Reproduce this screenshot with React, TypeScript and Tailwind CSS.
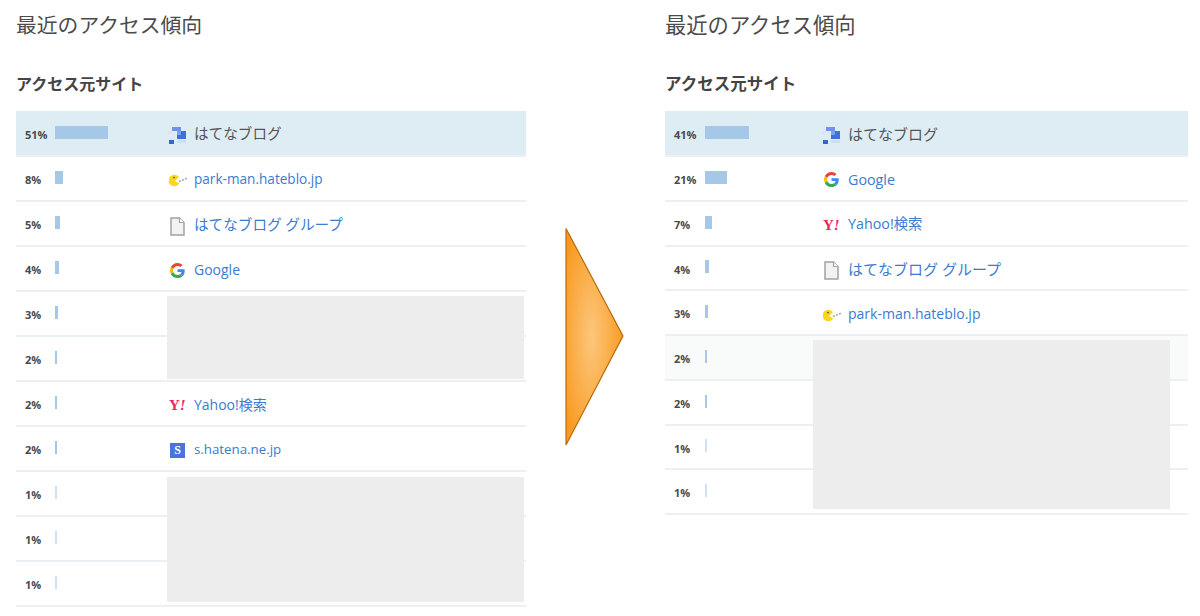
const font = { fontFamily: "'Open Sans', 'Noto Sans CJK JP', sans-serif" };

type Site = { pct: number; label?: string; icon?: string; size?: string; active?: boolean; tint?: boolean };

const leftRows: Site[] = [
  { pct: 51, label: "はてなブログ", icon: "hatena", size: "text-[14.6px]", active: true },
  { pct: 8, label: "park-man.hateblo.jp", icon: "pacman", size: "text-[13.6px]" },
  { pct: 5, label: "はてなブログ グループ", icon: "page", size: "text-[14.6px]" },
  { pct: 4, label: "Google", icon: "google", size: "text-[14px]" },
  { pct: 3 },
  { pct: 2 },
  { pct: 2, label: "Yahoo!検索", icon: "yahoo", size: "text-[14px]" },
  { pct: 2, label: "s.hatena.ne.jp", icon: "star", size: "text-[13.3px]" },
  { pct: 1 },
  { pct: 1 },
  { pct: 1 },
];

const rightRows: Site[] = [
  { pct: 41, label: "はてなブログ", icon: "hatena", size: "text-[15px]", active: true },
  { pct: 21, label: "Google", icon: "google", size: "text-[14.3px]" },
  { pct: 7, label: "Yahoo!検索", icon: "yahoo", size: "text-[14.3px]" },
  { pct: 4, label: "はてなブログ グループ", icon: "page", size: "text-[15px]" },
  { pct: 3, label: "park-man.hateblo.jp", icon: "pacman", size: "text-[14px]" },
  { pct: 2, tint: true },
  { pct: 2 },
  { pct: 1 },
  { pct: 1 },
];

function SiteIcon({ name }: { name?: string }) {
  if (name === "hatena") {
    return (
      <svg width="18" height="18" viewBox="0 0 18 18" className="shrink-0 mt-[5px]">
        <rect x="4" y="0" width="9" height="4" fill="#6f93e6" />
        <rect x="0" y="4" width="4" height="3" fill="#dbe4f6" />
        <rect x="9" y="4" width="9" height="8" fill="#3f6fdc" />
        <rect x="9" y="4" width="4" height="4" fill="#7f9fe8" />
        <rect x="1" y="13" width="5" height="4" fill="#3566d8" />
        <rect x="9" y="13" width="9" height="3" fill="#d0dcf4" />
      </svg>
    );
  }
  if (name === "pacman") {
    return (
      <svg width="19" height="13" viewBox="0 0 19 13" className="shrink-0 mt-[4px] ml-[1px]">
        <path d="M10 3A5.800 5.800 0 1 0 10.300 9.500L6 7Z" fill="#fbd51e" />
        <circle cx="5" cy="3.600" r="0.8" fill="#444" />
        <path d="M10 7.500l1.800-.8M13 6.200l1.800-.8M16 5l1.800-.8" stroke="#a8a8a8" strokeWidth="1.600" />
      </svg>
    );
  }
  if (name === "page") {
    return (
      <svg width="15" height="19" viewBox="0 0 15 19" className="shrink-0 mt-[4px] ml-[2px]">
        <path d="M1 1h8.500L14 5.500V18H1Z" fill="#f2f2f2" stroke="#a3a3a3" strokeWidth="1.500" />
        <path d="M9.500 1v4.500H14" fill="#fff" stroke="#a3a3a3" strokeWidth="1.200" />
      </svg>
    );
  }
  if (name === "google") {
    return (
      <svg width="15" height="15" viewBox="0 0 48 48" className="shrink-0 mt-[2px] ml-[2px]">
        <path fill="#EA4335" d="M24 9.500c3.500 0 6.700 1.200 9.200 3.600l6.900-6.900C35.900 2.400 30.500 0 24 0 14.600 0 6.500 5.400 2.600 13.200l8 6.200C12.500 13.700 17.800 9.500 24 9.500z" />
        <path fill="#4285F4" d="M47 24.500c0-1.600-.1-3.100-.4-4.500H24v9h12.900c-.6 3-2.200 5.500-4.700 7.200l7.700 6C44.400 38.100 47 31.900 47 24.500z" />
        <path fill="#FBBC05" d="M10.600 28.600c-.5-1.400-.8-3-.8-4.600s.3-3.200.8-4.600l-8-6.200C.9 16.500 0 20.100 0 24s.9 7.500 2.600 10.800l8-6.200z" />
        <path fill="#34A853" d="M24 48c6.500 0 11.900-2.100 15.900-5.800l-7.700-6c-2.200 1.500-4.900 2.300-8.200 2.300-6.200 0-11.500-4.200-13.400-9.900l-8 6.200C6.500 42.600 14.600 48 24 48z" />
      </svg>
    );
  }
  if (name === "yahoo") {
    return (
      <span className="w-[18px] shrink-0 ml-[1px] text-[15px] leading-none font-bold text-[#f0245a] mt-[3px]" style={{ fontFamily: "'Liberation Serif', serif" }}>
        Y<span className="italic">!</span>
      </span>
    );
  }
  if (name === "star") {
    return (
      <span className="w-[15px] h-[15px] shrink-0 ml-[2px] bg-[#4a74dc] text-white text-[12px] leading-[15px] font-bold text-center mt-[3px]" style={{ fontFamily: "'Liberation Serif', serif" }}>
        S
      </span>
    );
  }
  return null;
}

function Row({ site, heightClass, pctWidth, labelLeft, barScale }: {
  site: Site;
  heightClass: string;
  pctWidth: string;
  labelLeft: string;
  barScale: number;
}) {
  const bg = site.active ? "bg-[#deecf4]" : site.tint ? "bg-[#f9fbfb]" : "bg-white";
  const barColor = site.pct === 1 ? "bg-[#cfe2f4]" : "bg-[#a6c8e8]";
  return (
    <div className={`flex items-center border-b-2 border-[#ebf0f3] ${site.active ? "h-[46px]" : heightClass} ${bg}`}>
      <span className={`pl-[9px] pt-[4px] shrink-0 text-[11px] font-bold text-[#4a4a4a] ${pctWidth}`}>{site.pct}%</span>
      <div className="w-[114px] shrink-0 -mt-[2px]">
        <div className={`h-[13px] ${barColor}`} style={{ width: Math.max(2, Math.round(site.pct * barScale)) }} />
      </div>
      {site.label && (
        <div className={`flex items-center mt-[1px] ${labelLeft}`}>
          <div className="w-[26px] shrink-0 flex"><SiteIcon name={site.icon} /></div>
          <span className={`mt-[1px] ${site.size} ${site.active ? "text-[#555555]" : "text-[#3b7bd0]"}`}>{site.label}</span>
        </div>
      )}
    </div>
  );
}

function Panel({ rows, widthClass, titleClass, subClass, heightClass, pctWidth, labelLeft, barScale, masks }: {
  rows: Site[];
  widthClass: string;
  titleClass: string;
  subClass: string;
  heightClass: string;
  pctWidth: string;
  labelLeft: string;
  barScale: number;
  masks: string[];
}) {
  return (
    <div className={`shrink-0 ${widthClass}`}>
      <h1 className={`h-[50px] pt-[8px] font-normal text-[#4b4b4b] leading-[34px] ${titleClass}`}>最近のアクセス傾向</h1>
      <h2 className={`h-[61px] pt-[21px] font-bold text-[#444444] leading-[26px] ${subClass}`}>アクセス元サイト</h2>
      <div className="relative">
        {rows.map((site, i) => (
          <Row key={i} site={site} heightClass={heightClass} pctWidth={pctWidth} labelLeft={labelLeft} barScale={barScale} />
        ))}
        {masks.map((m) => (
          <div key={m} className={`absolute bg-[#ededed] ${m}`} />
        ))}
      </div>
    </div>
  );
}

export default function App() {
  return (
    <div className="w-[1200px] h-[616px] bg-white overflow-hidden flex pl-[16px]" style={font}>
      <Panel
        rows={leftRows}
        widthClass="w-[510px]"
        titleClass="text-[20.800px]"
        subClass="text-[16px]"
        heightClass="h-[45px]"
        pctWidth="w-[39px]"
        labelLeft="-ml-[1px]"
        barScale={1.04}
        masks={["left-[151px] top-[185px] w-[357px] h-[83px]", "left-[151px] top-[366px] w-[357px] h-[125px]"]}
      />
      <svg width="60" height="220" viewBox="0 0 60 220" className="shrink-0 ml-[39px] mt-[227px]">
        <defs>
          <radialGradient id="arrowFill" cx="0.45" cy="0.5" r="0.6">
            <stop offset="0" stopColor="#fdc67c" />
            <stop offset="1" stopColor="#f8981d" />
          </radialGradient>
        </defs>
        <path d="M1 1.500L58 109L1 218Z" fill="url(#arrowFill)" stroke="#b96a0c" strokeWidth="1.200" />
      </svg>
      <Panel
        rows={rightRows}
        widthClass="ml-[40px] w-[523px]"
        titleClass="text-[21.300px]"
        subClass="text-[16.500px]"
        heightClass="h-[44.750px]"
        pctWidth="w-[40px]"
        labelLeft="ml-[3px]"
        barScale={1.07}
        masks={["left-[148px] top-[229px] w-[357px] h-[169px]"]}
      />
    </div>
  );
}
